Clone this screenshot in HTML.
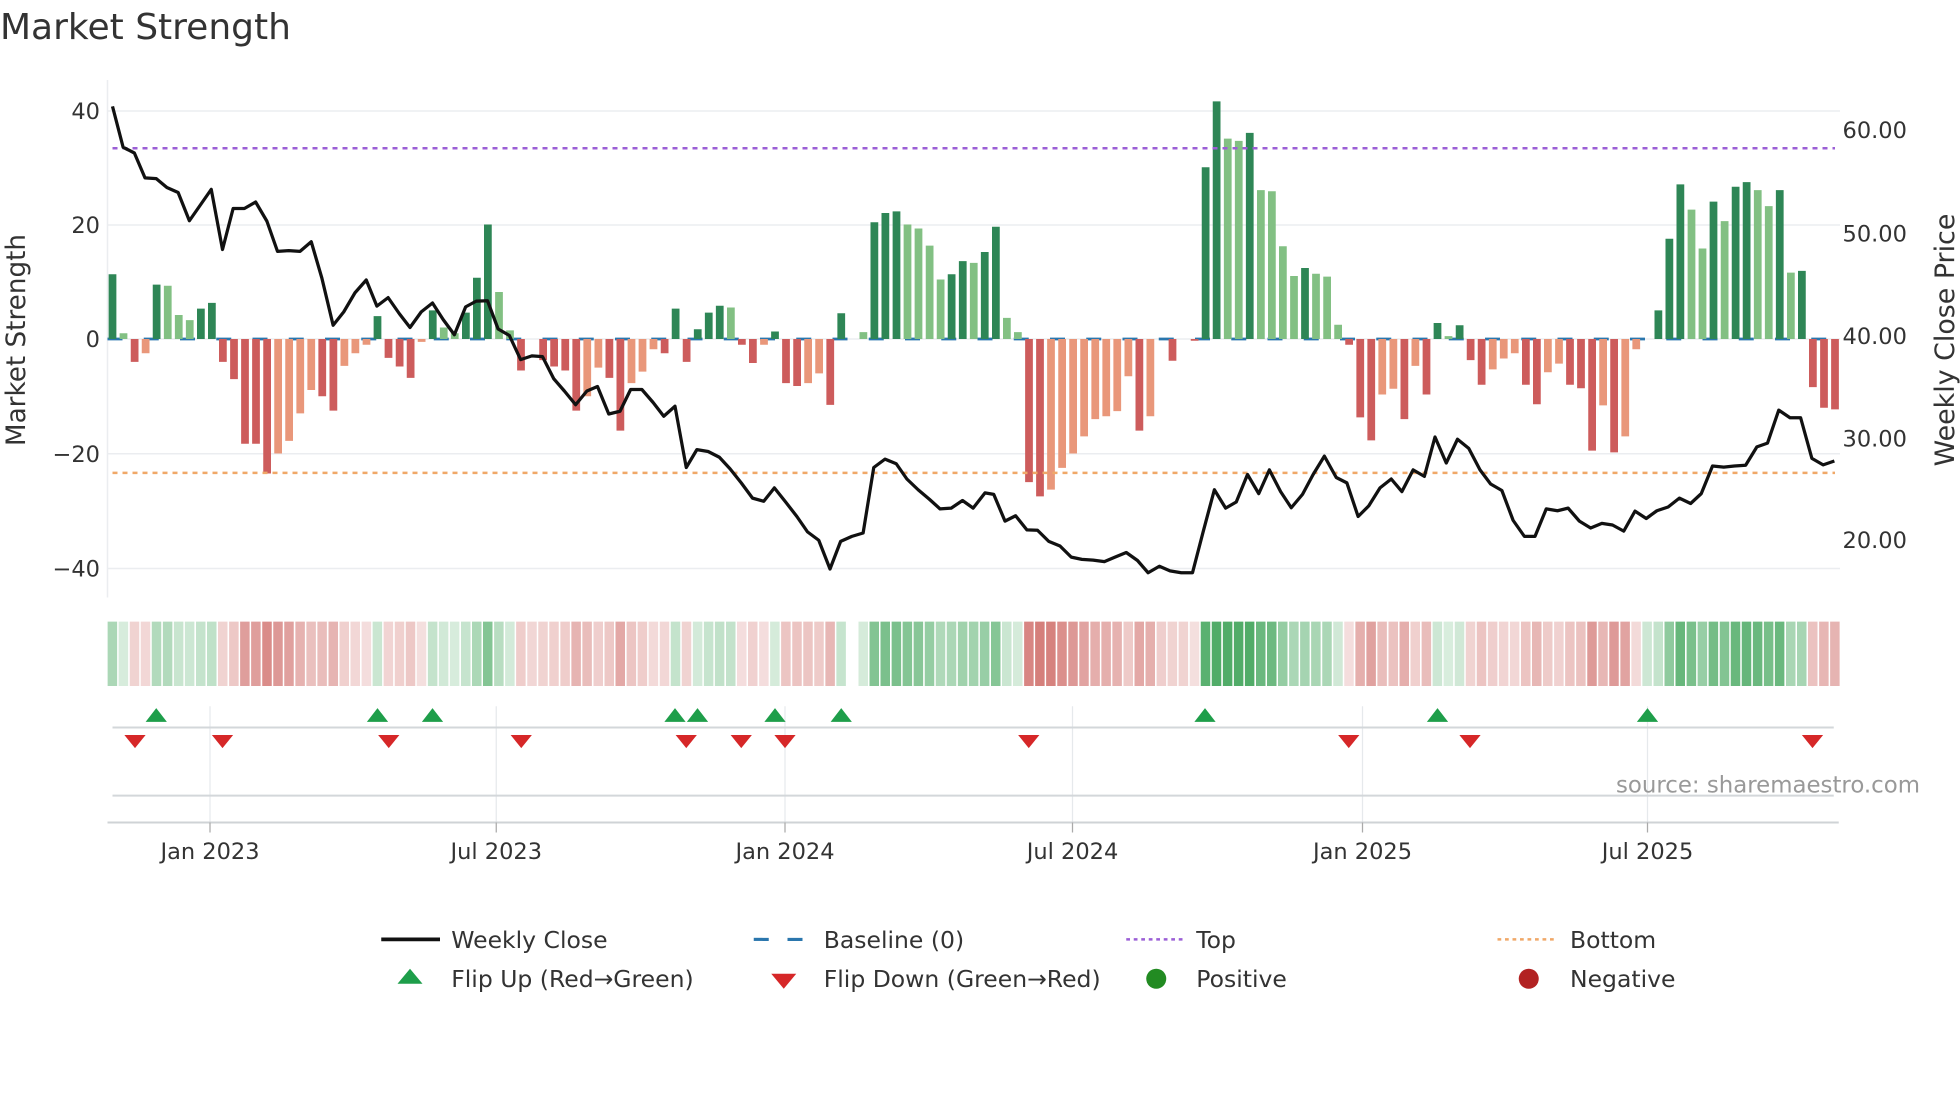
<!DOCTYPE html>
<html><head><meta charset="utf-8"><style>
html,body{margin:0;padding:0;background:#fff;}
svg{display:block;font-family:"DejaVu Sans","Liberation Sans",sans-serif;}
</style></head><body>
<svg id="s" width="1960" height="1102" viewBox="0 0 1568 881.6" xmlns="http://www.w3.org/2000/svg">
<rect width="1568" height="882" fill="#fff"/>
<text x="0" y="31" font-size="28.8" fill="#333">Market Strength</text>
<g stroke="#ebedf0" stroke-width="1.2">
<line x1="86" y1="88.8" x2="1472" y2="88.8"/><line x1="86" y1="180" x2="1472" y2="180"/>
<line x1="86" y1="271.2" x2="1472" y2="271.2"/><line x1="86" y1="363" x2="1472" y2="363"/>
<line x1="86" y1="454.8" x2="1472" y2="454.8"/>
<line x1="86" y1="64" x2="86" y2="478"/>
</g>
<line x1="86" y1="271.2" x2="1468" y2="271.2" stroke="#2a76ad" stroke-width="2.2" stroke-dasharray="12,17"/>
<g id="bars"></g>
<line x1="90" y1="118.6" x2="1468" y2="118.6" stroke="#9b5fd6" stroke-width="2" stroke-dasharray="4,4"/>
<line x1="90" y1="378.3" x2="1468" y2="378.3" stroke="#f0a868" stroke-width="2" stroke-dasharray="4,4"/>
<polyline fill="none" stroke="#111" stroke-width="2.6" stroke-linejoin="round" points="90,85.1 98.5,117.8 107.5,122.4 116,142.3 125,142.9 133.5,150 142.5,154 151.5,176.6 169,151.5 178,199.6 186.5,166.8 195.5,166.8 204.5,161.6 213.5,176.9 222,201.1 231,200.5 240,201.1 249,193.4 257.5,222.5 266.5,260.2 275,249.5 284,234.2 293,224 301.5,244.9 310.5,238.1 319.5,251 328,262 337,249.5 346,242.4 354.5,255.6 363.5,267.8 372.5,245.5 381,240.9 390,240.6 398.5,263.2 407.5,268.4 416.5,287.7 425.5,284.7 434,285.3 443,303 451.5,312.8 460.5,323.8 469.5,312.8 478,309.2 487,331.2 496,329 504.5,311.6 513.5,311.6 522.5,322 531,333 540,325 549,374 557.5,359.7 566.5,361.2 575.5,365.8 584,375 593,386.3 602,398.5 611,401 619.5,390.3 628.5,401.6 637.5,413.2 646,425.5 655,432.2 664,455.2 672.5,433.1 681.5,429.1 690.5,426.4 699,374 708,367.3 717,371 725.5,383.2 734.5,391.8 743.5,399.4 752,407.1 761,406.5 770,400.4 778.5,406.5 788,394.3 795,395.5 804,416.9 812.5,412.6 821.5,423.9 830,424.2 839,433.1 848,436.8 857,445.7 865.5,447.5 874.5,448.1 883.5,449.3 892,445.7 901,442 910,448.4 918.5,458.2 927.5,453 936,456.7 945,458.2 954,458.2 962.5,425.5 971.5,391.8 980.5,406.5 989,401.6 998,379.6 1007,394.9 1015.5,375.9 1024.5,393.3 1033,406.2 1042,395.5 1050.5,379.6 1059.5,364.9 1069,382 1077.5,386.3 1086.5,413.2 1095,404.7 1104,390.3 1113,383.2 1121.5,393.3 1130.5,375.9 1139.5,381.1 1148,349.6 1157,370.4 1166,351.4 1175,358.7 1184,375.9 1192.5,387.2 1201.5,392.4 1210.5,416.3 1219.5,429.1 1228,429.1 1237,407.1 1246,408.6 1254.5,406.5 1263.5,416.9 1272.5,422.4 1281.5,418.7 1290,420 1299,424.9 1308,408.9 1317,414.8 1325.5,408.6 1334.5,405.6 1343.5,398.5 1352.5,402.8 1361,394.9 1370,372.8 1379,373.7 1387.5,372.8 1396.5,372.2 1405.5,357.5 1414,354.5 1423,328.1 1432,334.2 1440.5,334.2 1449.5,366.7 1458.5,371.9 1467.5,368.8"/>
<g font-size="18" fill="#333" text-anchor="end">
<text x="80" y="95">40</text><text x="80" y="186.5">20</text><text x="80" y="277.5">0</text>
<text x="80" y="369.5">−20</text><text x="80" y="461">−40</text>
</g>
<g font-size="18" fill="#333">
<text x="1474" y="110.5">60.00</text><text x="1474" y="193">50.00</text><text x="1474" y="275">40.00</text>
<text x="1474" y="357">30.00</text><text x="1474" y="438.5">20.00</text>
</g>
<text transform="translate(20,272) rotate(-90)" text-anchor="middle" font-size="21" fill="#333">Market Strength</text>
<text transform="translate(1563,272) rotate(-90)" text-anchor="middle" font-size="21.5" fill="#333">Weekly Close Price</text>
<g id="strip"></g>
<g stroke="#e6e9ec" stroke-width="1">
<line x1="168" y1="565" x2="168" y2="658"/><line x1="397" y1="565" x2="397" y2="658"/>
<line x1="628" y1="565" x2="628" y2="658"/><line x1="858" y1="565" x2="858" y2="658"/>
<line x1="1090" y1="565" x2="1090" y2="658"/><line x1="1318" y1="565" x2="1318" y2="658"/>
</g>
<line x1="90" y1="582" x2="1467" y2="582" stroke="#d3d7da" stroke-width="1.6"/>
<line x1="90" y1="636.5" x2="1467" y2="636.5" stroke="#d3d7da" stroke-width="1.6"/>
<line x1="86" y1="658" x2="1471" y2="658" stroke="#cfd3d6" stroke-width="1.6"/>
<g stroke="#aaa" stroke-width="1">
<line x1="168" y1="658" x2="168" y2="666"/><line x1="397" y1="658" x2="397" y2="666"/>
<line x1="628" y1="658" x2="628" y2="666"/><line x1="858" y1="658" x2="858" y2="666"/>
<line x1="1090" y1="658" x2="1090" y2="666"/><line x1="1318" y1="658" x2="1318" y2="666"/>
</g>
<g id="flips"></g>
<g font-size="18" fill="#333" text-anchor="middle">
<text x="168" y="687">Jan 2023</text><text x="397" y="687">Jul 2023</text><text x="628" y="687">Jan 2024</text>
<text x="858" y="687">Jul 2024</text><text x="1090" y="687">Jan 2025</text><text x="1318" y="687">Jul 2025</text>
</g>
<text x="1536" y="634" text-anchor="end" font-size="18.3" fill="#999">source: sharemaestro.com</text>
<g font-size="18.8" fill="#333">
<line x1="305" y1="751.5" x2="352" y2="751.5" stroke="#111" stroke-width="3"/>
<text x="361" y="758.5">Weekly Close</text>
<line x1="603" y1="751.5" x2="647" y2="751.5" stroke="#2a76ad" stroke-width="2.5" stroke-dasharray="12,15"/>
<text x="659" y="758.5">Baseline (0)</text>
<line x1="901" y1="751.5" x2="946" y2="751.5" stroke="#9b5fd6" stroke-width="2" stroke-dasharray="3,3"/>
<text x="957" y="758.5">Top</text>
<line x1="1198" y1="751.5" x2="1243" y2="751.5" stroke="#f0a868" stroke-width="2" stroke-dasharray="3,3"/>
<text x="1256" y="758.5">Bottom</text>
<polygon points="328,775 338,787 318,787" fill="#1e9e4a"/>
<text x="361" y="789.5">Flip Up (Red→Green)</text>
<polygon points="617,779 637,779 627,791" fill="#d62728"/>
<text x="659" y="789.5">Flip Down (Green→Red)</text>
<circle cx="925" cy="783" r="8" fill="#228b22"/>
<text x="957" y="789.5">Positive</text>
<circle cx="1223" cy="783" r="8" fill="#b22222"/>
<text x="1256" y="789.5">Negative</text>
</g>
</svg>
<script>
var D="D11.3 L1 R-4 O-2.5 D9.5 L9.3 L4.2 L3.3 D5.3 D6.3 R-4 R-7 R-18.3 R-18.3 R-23.5 O-20 O-17.8 O-13 O-8.9 R-10 R-12.5 O-4.7 O-2.5 O-1 D4 R-3.3 R-4.8 R-6.8 O-0.5 D5 L2 L1 D4.6 D10.7 D20 L8.2 L1.5 R-5.5 Z0 R-3.7 R-4.8 R-5.5 R-12.5 O-10 O-5 R-6.8 R-16 O-7.7 O-5.7 O-1.8 R-2.5 D5.3 R-4 D1.7 D4.6 D5.8 L5.5 R-1 R-4.2 O-1 D1.3 R-7.7 R-8.2 O-7.7 O-6 R-11.5 D4.5 Z0 L1.2 D20.4 D22 D22.3 L20 L19.3 L16.3 L10.4 D11.3 D13.6 L13.3 D15.2 D19.6 L3.7 L1.2 R-25 R-27.5 O-26.3 O-22.5 O-20 O-17 O-14 O-13.5 O-12.6 O-6.5 R-16 O-13.5 Z0 R-3.8 Z0 R-0.3 D30 D41.5 L35 L34.6 D36 L26 L25.8 L16.2 L11 D12.4 L11.4 L10.9 L2.5 R-1 R-13.7 R-17.7 O-9.7 O-8.7 R-14 O-4.7 R-9.7 D2.8 L0.5 D2.4 R-3.7 R-8 O-5.3 O-3.4 O-2.5 R-8 R-11.4 O-5.8 O-4.3 R-8 R-8.6 R-19.5 O-11.6 R-19.8 O-17 O-1.8 Z0 D5 D17.5 D27 L22.6 L15.8 D24 L20.6 D26.6 D27.4 L26 L23.2 D26 L11.6 D11.9 R-8.4 R-12 R-12.3".split(" ");
var C={D:"#2e8656",L:"#82c083",R:"#cd5c5c",O:"#e9977a",Z:"#fff"};
var ZS={38:-3,95:-5,97:-4,139:3};
var N=D.length,sp=(1468-90)/(N-1),b="",st="";
for(var i=0;i<N;i++){var t=D[i][0],v=parseFloat(D[i].slice(1)),x=90+sp*i;
 if(t!="Z"){var y0=271.2,y1=271.2-4.58*v;b+='<rect x="'+(x-3.1).toFixed(1)+'" y="'+Math.min(y0,y1).toFixed(1)+'" width="6.2" height="'+Math.max(Math.abs(y1-y0),0.8).toFixed(1)+'" fill="'+C[t]+'"/>';}
 var sv=(t=="Z"&&ZS[i]!==undefined)?ZS[i]:v;
 var a=sv==0?0:Math.min(0.2+0.75*Math.abs(sv)/32,0.95),col=sv>=0?"72,168,96":"205,102,98";
 if(a>0)st+='<rect x="'+(x-3.9).toFixed(1)+'" y="497.3" width="7.6" height="51.5" fill="rgba('+col+','+a.toFixed(2)+')"/>';}
document.getElementById("bars").innerHTML=b;document.getElementById("strip").innerHTML=st;
var up=[125,302,346,540,558,620,673,964,1150,1318],dn=[108,178,311,417,549,593,628,823,1079,1176,1450],f="";
up.forEach(function(x){f+='<polygon points="'+x+',566.5 '+(x+8.5)+',577.5 '+(x-8.5)+',577.5" fill="#1e9e4a"/>';});
dn.forEach(function(x){f+='<polygon points="'+(x-8.5)+',588 '+(x+8.5)+',588 '+x+',598.5" fill="#d62728"/>';});
document.getElementById("flips").innerHTML=f;
</script>
</body></html>
